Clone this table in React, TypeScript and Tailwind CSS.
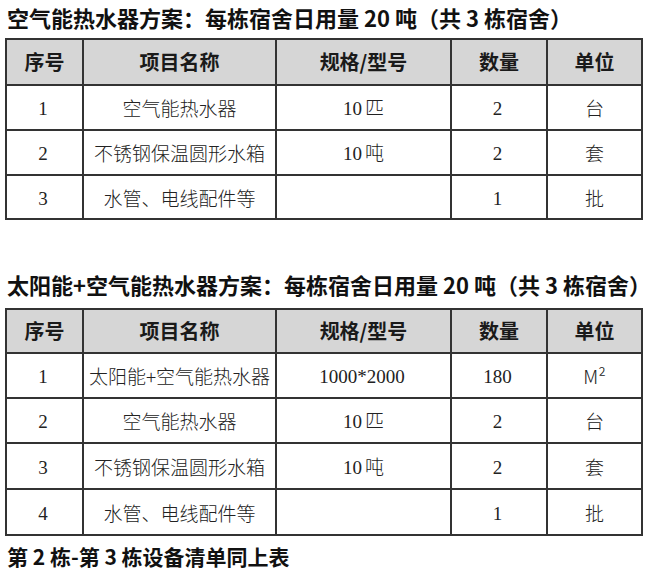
import React from "react";

type Row = { no: string; name: string; spec: string; qty: string; unit: string };

const heads = ["序号", "项目名称", "规格/型号", "数量", "单位"];

const planA: Row[] = [
  { no: "1", name: "空气能热水器", spec: "10匹", qty: "2", unit: "台" },
  { no: "2", name: "不锈钢保温圆形水箱", spec: "10吨", qty: "2", unit: "套" },
  { no: "3", name: "水管、电线配件等", spec: "", qty: "1", unit: "批" },
];

const planB: Row[] = [
  { no: "1", name: "太阳能+空气能热水器", spec: "1000*2000", qty: "180", unit: "M²" },
  { no: "2", name: "空气能热水器", spec: "10匹", qty: "2", unit: "台" },
  { no: "3", name: "不锈钢保温圆形水箱", spec: "10吨", qty: "2", unit: "套" },
  { no: "4", name: "水管、电线配件等", spec: "", qty: "1", unit: "批" },
];

const cjk = "font-['Noto_Sans_CJK_SC',sans-serif]";

// split ascii digits out so they get the thin narrow look of the original
function Txt({ s }: { s: string }) {
  const parts = s.match(/[0-9*]+|[^0-9*]+/g) ?? [];
  return (
    <>
      {parts.map((p, i) =>
        /^[0-9*]+$/.test(p) ? (
          <span key={i} className="font-['Liberation_Serif',serif] text-[19px] mr-[3px]">
            {p}
          </span>
        ) : (
          <span key={i}>{p}</span>
        )
      )}
    </>
  );
}

function Sheet({ rows, headH, rowH }: { rows: Row[]; headH: string; rowH: string[] }) {
  return (
    <table className="w-[636px] table-fixed border-collapse border-2 border-[#333]">
      <colgroup>
        <col className="w-[77px]" />
        <col className="w-[193px]" />
        <col className="w-[175px]" />
        <col className="w-[96px]" />
        <col className="w-[95px]" />
      </colgroup>
      <thead>
        <tr className={`${headH} bg-[#d6d6d6]`}>
          {heads.map((h) => (
            <th key={h} className={`border-2 border-[#333] p-0 text-center text-[20px] font-bold text-[#1a1a1a] ${cjk}`}>
              {h}
            </th>
          ))}
        </tr>
      </thead>
      <tbody>
        {rows.map((r, i) => (
          <tr key={r.no} className={rowH[i]}>
            {[r.no, r.name, r.spec, r.qty, r.unit].map((c, j) => (
              <td
                key={j}
                className={`border-2 border-[#333] p-0 text-center text-[19px] font-light leading-none text-[#222] whitespace-nowrap ${cjk}`}
              >
                <Txt s={c} />
              </td>
            ))}
          </tr>
        ))}
      </tbody>
    </table>
  );
}

export default function App() {
  return (
    <div className="w-[650px] h-[570px] bg-white pl-[5px] overflow-hidden">
      <h1 className={`h-[38px] pl-[2px] pt-[3px] text-[22px] font-bold leading-[28px] text-[#111] whitespace-nowrap ${cjk}`}>
        空气能热水器方案：每栋宿舍日用量 20 吨（共 3 栋宿舍）
      </h1>
      <Sheet rows={planA} headH="h-[46px]" rowH={["h-[45px]", "h-[45px]", "h-[44px]"]} />
      <h2 className={`mt-[50px] h-[38px] pl-[2px] text-[22px] font-bold leading-[28px] text-[#111] whitespace-nowrap ${cjk}`}>
        太阳能+空气能热水器方案：每栋宿舍日用量 20 吨（共 3 栋宿舍）
      </h2>
      <Sheet rows={planB} headH="h-[44px]" rowH={["h-[45px]", "h-[45px]", "h-[46px]", "h-[46px]"]} />
      <p className={`mt-[6px] pl-[2px] text-[21px] font-bold leading-[28px] text-[#111] whitespace-nowrap ${cjk}`}>
        第 2 栋-第 3 栋设备清单同上表
      </p>
    </div>
  );
}
